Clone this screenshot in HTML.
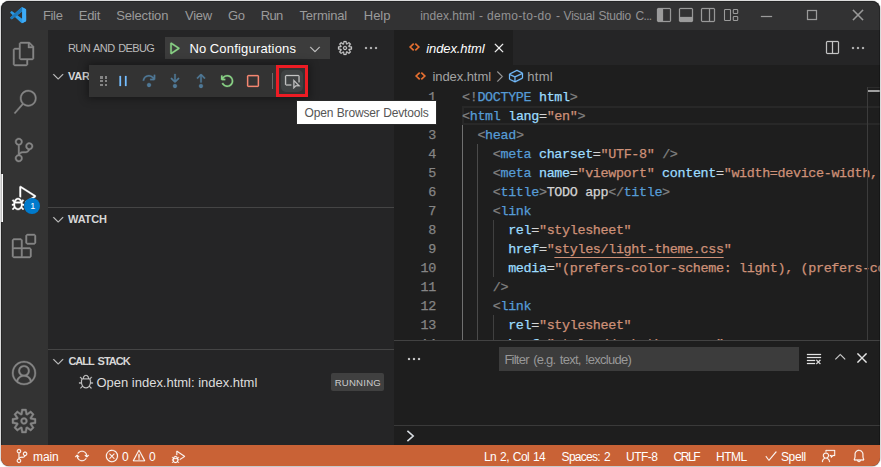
<!DOCTYPE html>
<html lang="en"><head><meta charset="utf-8"><title>index.html - demo-to-do - Visual Studio Code</title>
<style>
html,body{margin:0;padding:0;}
body{width:881px;height:467px;background:#ffffff;position:relative;overflow:hidden;font-family:"Liberation Sans",sans-serif;}
#bg{position:absolute;left:0;top:0;width:881px;height:467px;background:#ffffff;border:1px solid #dcdcdc;border-bottom-color:#c6cacd;border-radius:9px;box-sizing:border-box;}
#edge{position:absolute;left:1px;top:1px;width:877px;height:443px;border-radius:8px 8px 0 0;border:1px solid rgba(0,0,0,.25);border-bottom:none;pointer-events:none;}
#win{position:absolute;left:1px;top:1px;width:879px;height:465px;border-radius:8px;overflow:hidden;background:#1e1e1e;}
#in{position:absolute;left:-1px;top:-1px;width:881px;height:467px;}
.r{position:absolute;box-sizing:content-box;}
.i{position:absolute;display:block;overflow:visible;}
.t{position:absolute;white-space:pre;line-height:20px;height:20px;}
.code{position:absolute;overflow:hidden;font-family:"Liberation Mono",monospace;font-size:13.4px;letter-spacing:-0.341px;-webkit-text-stroke:0.25px;}
.cl{position:absolute;left:68px;white-space:pre;line-height:19px;height:19px;}
.ln{position:absolute;left:0;width:42px;text-align:right;white-space:pre;line-height:19px;height:19px;color:#858585;}
</style></head>
<body><div id="bg"></div><div id="win"><div id="in">
<div class="r" style="left:1px;top:1px;width:879px;height:29px;background:#323233;"></div>
<div class="r" style="left:1px;top:30px;width:47px;height:415px;background:#333333;"></div>
<div class="r" style="left:48px;top:30px;width:346px;height:415px;background:#252526;"></div>
<div class="r" style="left:394px;top:30px;width:486px;height:35px;background:#252526;"></div>
<div class="r" style="left:394px;top:30px;width:119px;height:35px;background:#1e1e1e;"></div>
<div class="r" style="left:394px;top:65px;width:486px;height:380px;background:#1e1e1e;"></div>
<div class="r" style="left:1px;top:445px;width:879px;height:21px;background:#c96236;"></div>
<svg class="i" style="left:8.7px;top:5.9px" width="19.6" height="19.6" viewBox="0 0 16 16">
<clipPath id="lg"><path d="M10.88 13.92Q10.56 14.08 10.24 13.92Q10.08 13.87 9.92 13.76L4.8 9.07L2.56 10.77Q2.45 10.88 2.24 10.88Q2.03 10.88 1.87 10.72L1.17 10.08Q1.01 9.92 1.01 9.68Q1.01 9.44 1.17 9.28L3.09 7.52L1.17 5.71Q1.01 5.55 1.01 5.31Q1.01 5.07 1.17 4.91L1.87 4.27Q2.03 4.11 2.24 4.11Q2.45 4.11 2.56 4.21L4.8 5.92L10.03 1.17Q10.24 1.01 10.45 0.99Q10.67 0.96 10.88 1.07L13.55 2.4Q13.76 2.45 13.87 2.67Q13.97 2.88 13.97 3.09V8H10.77V4.53L6.88 7.52L10.77 10.45V8H14.03V11.89Q14.03 12.11 13.89 12.32Q13.76 12.53 13.55 12.64Z"/></clipPath>
<path d="M10.88 13.92Q10.56 14.08 10.24 13.92Q10.08 13.87 9.92 13.76L4.8 9.07L2.56 10.77Q2.45 10.88 2.24 10.88Q2.03 10.88 1.87 10.72L1.17 10.08Q1.01 9.92 1.01 9.68Q1.01 9.44 1.17 9.28L3.09 7.52L1.17 5.71Q1.01 5.55 1.01 5.31Q1.01 5.07 1.17 4.91L1.87 4.27Q2.03 4.11 2.24 4.11Q2.45 4.11 2.56 4.21L4.8 5.92L10.03 1.17Q10.24 1.01 10.45 0.99Q10.67 0.96 10.88 1.07L13.55 2.4Q13.76 2.45 13.87 2.67Q13.97 2.88 13.97 3.09V8H10.77V4.53L6.88 7.52L10.77 10.45V8H14.03V11.89Q14.03 12.11 13.89 12.32Q13.76 12.53 13.55 12.64Z" fill="#2b9ae6"/>
<path clip-path="url(#lg)" d="M10.03 1.1 L10.9 0.9 L10.9 4.45 L2.56 10.8 L2.2 11 L1 10.1 L1 9.3 Z" fill="#1c78bb"/>
<path d="M10.77 1 L13.6 2.4 Q13.97 2.6 13.97 3.09 V11.89 Q14 12.4 13.55 12.64 L10.77 14 Z" fill="#3dabf7"/>
</svg>
<span class="t" style="left:43.00px;top:5.50px;font-size:13px;color:#9b9b9b;letter-spacing:-0.362px;">File</span>
<span class="t" style="left:78.75px;top:5.50px;font-size:13px;color:#9b9b9b;letter-spacing:-0.288px;">Edit</span>
<span class="t" style="left:116.25px;top:5.50px;font-size:13px;color:#9b9b9b;letter-spacing:-0.164px;">Selection</span>
<span class="t" style="left:185.00px;top:5.50px;font-size:13px;color:#9b9b9b;letter-spacing:-0.236px;">View</span>
<span class="t" style="left:228.10px;top:5.50px;font-size:13px;color:#9b9b9b;letter-spacing:-0.521px;">Go</span>
<span class="t" style="left:260.75px;top:5.50px;font-size:13px;color:#9b9b9b;letter-spacing:-0.699px;">Run</span>
<span class="t" style="left:299.50px;top:5.50px;font-size:13px;color:#9b9b9b;letter-spacing:-0.203px;">Terminal</span>
<span class="t" style="left:363.75px;top:5.50px;font-size:13px;color:#9b9b9b;letter-spacing:0.003px;">Help</span>
<span class="t" style="left:420.20px;top:6.34px;font-size:12px;color:#939393;letter-spacing:0.001px;">index.html</span>
<span class="t" style="left:479.00px;top:6.34px;font-size:12px;color:#939393;letter-spacing:0.104px;">-</span>
<span class="t" style="left:486.90px;top:6.34px;font-size:12px;color:#939393;letter-spacing:0.333px;">demo-to-do</span>
<span class="t" style="left:556.10px;top:6.34px;font-size:12px;color:#939393;letter-spacing:0.104px;">-</span>
<span class="t" style="left:563.60px;top:6.34px;font-size:12px;color:#939393;letter-spacing:-0.228px;">Visual</span>
<span class="t" style="left:598.40px;top:6.34px;font-size:12px;color:#939393;letter-spacing:-0.238px;">Studio</span>
<span class="t" style="left:635.50px;top:6.34px;font-size:12px;color:#939393;letter-spacing:-0.667px;">C...</span>
<svg class="i" style="left:656.00px;top:7.00px;" width="16" height="16" viewBox="0 0 16 16" fill="#9b9b9b" stroke="#9b9b9b" stroke-width="0.25"><path d="M2.03 1.01 1.01 1.97V13.97L2.03 14.99H14.03L14.99 13.97V1.97L14.03 1.01ZM14.03 13.97H6.99V1.97H14.03Z"/></svg>
<svg class="i" style="left:678.00px;top:7.00px;" width="16" height="16" viewBox="0 0 16 16" fill="#9b9b9b" stroke="#9b9b9b" stroke-width="0.25"><path d="M2.03 1.01 1.01 1.97V13.97L2.03 14.99H14.03L14.99 13.97V1.97L14.03 1.01ZM2.03 9.97V1.97H14.03V9.97Z"/></svg>
<svg class="i" style="left:700.00px;top:7.00px;" width="16" height="16" viewBox="0 0 16 16" fill="#9b9b9b" stroke="#9b9b9b" stroke-width="0.25"><path d="M2.03 1.01 1.01 2.03V14.03L2.03 14.99H14.03L14.99 14.03V2.03L14.03 1.01ZM2.03 14.03V2.03H9.01V14.03ZM10.03 14.03V2.03H14.03V14.03Z"/></svg>
<svg class="i" style="left:722.5px;top:7px" width="16" height="16" viewBox="0 0 16 16" fill="none" stroke="#9b9b9b" stroke-width="1.1"><rect x="1.5" y="2.5" width="6" height="11" rx="0.8"/><rect x="10.3" y="2.5" width="4.4" height="4" rx="0.8"/><rect x="10.3" y="9.5" width="4.4" height="4" rx="0.8"/></svg>
<svg class="i" style="left:757.70px;top:7.50px;" width="16" height="16" viewBox="0 0 16 16" fill="#9b9b9b" stroke="#9b9b9b" stroke-width="0.25"><path d="M14.03 8V9.01H2.99V8Z"/></svg>
<svg class="i" style="left:804.00px;top:7.00px;" width="16" height="16" viewBox="0 0 16 16" fill="#9b9b9b" stroke="#9b9b9b" stroke-width="0.25"><path d="M2.99 2.99V13.01H13.01V2.99ZM12 12H4V4H12Z"/></svg>
<svg class="i" style="left:850.00px;top:7.00px;" width="16" height="16" viewBox="0 0 16 16" fill="#9b9b9b" stroke="#9b9b9b" stroke-width="0.25"><path d="M7.09 8 2.56 12.53 3.47 13.44 8 8.91 12.53 13.44 13.44 12.53 8.91 8 13.44 3.47 12.53 2.56 8 7.09 3.47 2.56 2.56 3.47Z"/></svg>
<svg class="i" style="left:12.00px;top:42.00px;" width="24" height="24" viewBox="0 0 16 16" fill="#858585" stroke="#858585" stroke-width="0.25"><path d="M11.68 0H5.65L4.69 1.01V4H1.65L0.69 5.01V15.04L1.65 16H9.71L10.67 15.04V12H13.81L14.67 11.04V2.99ZM11.68 1.39 13.28 2.99H11.68ZM9.65 14.99H1.65V5.01H4.69V11.04L5.65 12H9.65ZM13.65 10.99H5.65V1.01H10.67V4H13.65Z"/></svg>
<svg class="i" style="left:12.50px;top:90.00px;" width="24" height="24" viewBox="0 0 16 16" fill="#858585" stroke="#858585" stroke-width="0.25"><path d="M10.19 0Q8.53 0 7.17 0.88Q5.81 1.76 5.15 3.25Q4.48 4.75 4.72 6.35Q4.96 7.95 6.03 9.12L0.69 15.25L1.44 15.89L6.77 9.81Q8.21 10.93 10 10.99Q11.79 11.04 13.28 10.03Q14.77 9.01 15.36 7.31Q15.95 5.6 15.41 3.87Q14.88 2.13 13.41 1.07Q11.95 0 10.19 0ZM10.19 9.97Q8.96 9.97 7.92 9.39Q6.88 8.8 6.27 7.76Q5.65 6.72 5.65 5.49Q5.65 4.27 6.27 3.23Q6.88 2.19 7.92 1.6Q8.96 1.01 10.19 1.01Q11.41 1.01 12.43 1.6Q13.44 2.19 14.05 3.23Q14.67 4.27 14.67 5.49Q14.67 6.72 14.05 7.76Q13.44 8.8 12.43 9.41Q11.41 10.03 10.19 10.03Z"/></svg>
<svg class="i" style="left:12.00px;top:138.00px;" width="24" height="24" viewBox="0 0 16 16" fill="#858585" stroke="#858585" stroke-width="0.25"><path d="M14.03 5.49Q14.03 4.8 13.65 4.19Q13.28 3.57 12.64 3.25Q12 2.93 11.31 2.99Q10.61 3.04 10.03 3.47Q9.44 3.89 9.2 4.56Q8.96 5.23 9.07 5.92Q9.17 6.61 9.65 7.12Q10.13 7.63 10.83 7.84Q10.56 8.37 10.08 8.67Q9.6 8.96 9.01 8.96H7.04Q5.87 8.96 5.01 9.76V4.91Q5.97 4.75 6.53 3.97Q7.09 3.2 7.01 2.24Q6.93 1.28 6.21 0.64Q5.49 0 4.53 0Q3.57 0 2.85 0.64Q2.13 1.28 2.05 2.24Q1.97 3.2 2.53 3.97Q3.09 4.75 4.05 4.91V10.99Q3.09 11.2 2.51 11.95Q1.92 12.69 2 13.65Q2.08 14.61 2.75 15.28Q3.41 15.95 4.37 16Q5.33 16.05 6.08 15.47Q6.83 14.88 6.99 13.92Q7.15 12.96 6.67 12.16Q6.19 11.36 5.23 11.09Q5.49 10.56 5.97 10.27Q6.45 9.97 7.04 9.97H9.01Q9.97 9.97 10.75 9.41Q11.52 8.85 11.84 7.95Q12.75 7.84 13.39 7.12Q14.03 6.4 14.03 5.49ZM3.04 2.51Q3.04 1.87 3.47 1.44Q3.89 1.01 4.53 1.01Q5.17 1.01 5.6 1.44Q6.03 1.87 6.03 2.48Q6.03 3.09 5.6 3.55Q5.17 4 4.53 4Q3.89 4 3.47 3.55Q3.04 3.09 3.04 2.51ZM6.03 13.44Q6.03 14.08 5.6 14.51Q5.17 14.93 4.53 14.93Q3.89 14.93 3.47 14.51Q3.04 14.08 3.04 13.47Q3.04 12.85 3.47 12.4Q3.89 11.95 4.53 11.95Q5.17 11.95 5.6 12.4Q6.03 12.85 6.03 13.44ZM11.52 6.99Q10.88 6.99 10.45 6.53Q10.03 6.08 10.03 5.47Q10.03 4.85 10.45 4.43Q10.88 4 11.49 4Q12.11 4 12.56 4.43Q13.01 4.85 13.01 5.47Q13.01 6.08 12.56 6.53Q12.11 6.99 11.52 6.99Z"/></svg>
<div class="r" style="left:1px;top:174px;width:1.6px;height:48px;background:#ffffff;"></div>
<svg class="i" style="left:12.20px;top:186.00px;" width="24" height="24" viewBox="0 0 16 16" fill="#ffffff" stroke="#ffffff" stroke-width="0.25"><path d="M7.31 9.01 6.4 9.87Q6.19 9.07 5.52 8.53Q4.85 8 4 8Q3.15 8 2.48 8.53Q1.81 9.07 1.6 9.87L0.69 9.01L0 9.71L1.17 10.83L1.01 10.99V12H0V13.01H1.01V13.07Q1.07 13.55 1.28 14.03L0 15.31L0.69 16L1.81 14.88Q2.19 15.41 2.77 15.71Q3.36 16 4 16Q4.64 16 5.23 15.71Q5.81 15.41 6.19 14.88L7.31 16L8 15.31L6.72 13.97Q6.93 13.55 6.99 13.01V12.96H8V12H6.99V10.99L6.88 10.83L8 9.71ZM4 9.01Q4.64 9.01 5.07 9.44Q5.49 9.87 5.49 10.51H2.51Q2.51 9.87 2.93 9.44Q3.36 9.01 4 9.01ZM6.03 13.01Q5.92 13.81 5.36 14.37Q4.8 14.93 4 14.99Q3.2 14.93 2.64 14.37Q2.08 13.81 2.03 13.01V11.52H6.03ZM15.84 6.4V7.25L9.01 11.57V10.4L14.67 6.83L6.03 1.33V7.63Q5.55 7.31 5.01 7.15V0.43L5.76 0Z"/></svg>
<div class="r" style="left:24px;top:198px;width:16px;height:16px;border-radius:8px;background:#007acc"></div>
<span class="t" style="left:30.20px;top:196.08px;font-size:9px;color:#ffffff;letter-spacing:-1.405px;">1</span>
<svg class="i" style="left:12.20px;top:234.00px;" width="24" height="24" viewBox="0 0 16 16" fill="#858585" stroke="#858585" stroke-width="0.25"><path d="M9.01 1.01 10.03 0H14.99L16 1.01V5.97L14.99 6.99H10.03L9.01 5.97ZM10.03 1.01V5.97H14.99V1.01ZM0 9.97V4L1.01 2.99H6.03L6.99 4V9.01H12L13.01 9.97V14.99L12 16H1.01L0 14.99ZM6.03 9.01V4H1.01V9.01ZM6.03 9.97H1.01V14.99H6.03ZM6.99 14.99H12V9.97H6.99Z"/></svg>
<svg class="i" style="left:12.20px;top:361.00px;" width="24" height="24" viewBox="0 0 16 16" fill="#858585" stroke="#858585" stroke-width="0.25"><path d="M16 8Q16 5.81 14.93 3.97Q13.87 2.13 12.03 1.07Q10.19 0 8 0Q5.81 0 3.97 1.07Q2.13 2.13 1.07 3.97Q0 5.81 0 8Q0 9.76 0.75 11.36Q1.49 12.96 2.83 14.08L3.52 14.61Q5.55 16 8 16Q10.45 16 12.48 14.61L13.23 14.08Q14.51 12.96 15.25 11.36Q16 9.76 16 8ZM8 14.99Q5.81 14.99 4 13.71L4.05 13.33Q4.21 12.8 4.48 12.35Q4.75 11.89 5.12 11.52Q5.49 11.15 5.92 10.88Q6.35 10.61 6.91 10.48Q7.47 10.35 8 10.35Q8.8 10.35 9.57 10.64Q10.35 10.93 10.91 11.49Q11.47 12.05 11.79 12.8Q11.95 13.23 12.05 13.71Q10.24 14.99 8 14.99ZM5.55 7.57Q5.33 7.09 5.33 6.56Q5.33 6.03 5.55 5.55Q5.76 5.07 6.11 4.72Q6.45 4.37 6.93 4.13Q7.41 3.89 8 3.89Q8.59 3.89 9.04 4.11Q9.49 4.32 9.87 4.69Q10.24 5.07 10.45 5.55Q10.67 6.03 10.67 6.59Q10.67 7.15 10.45 7.6Q10.24 8.05 9.87 8.43Q9.49 8.8 9.01 9.01Q8 9.44 6.93 9.01Q6.51 8.8 6.13 8.43Q5.76 8.05 5.55 7.57ZM12.96 12.91Q12.96 12.91 12.96 12.85V12.8Q12.75 12.05 12.29 11.41Q11.84 10.77 11.2 10.29Q10.72 9.92 10.13 9.65Q10.4 9.49 10.61 9.28Q10.99 8.91 11.25 8.48Q11.79 7.63 11.73 6.56Q11.79 5.81 11.49 5.12Q11.2 4.43 10.67 3.89Q10.13 3.36 9.44 3.09Q8.75 2.83 7.97 2.83Q7.2 2.83 6.51 3.09Q5.81 3.36 5.31 3.89Q4.8 4.43 4.51 5.12Q4.21 5.81 4.21 6.56Q4.21 7.09 4.37 7.6Q4.53 8.11 4.75 8.48Q4.96 8.85 5.39 9.28Q5.6 9.49 5.87 9.71Q5.33 9.92 4.85 10.29Q4.21 10.77 3.76 11.41Q3.31 12.05 3.04 12.85V12.91Q2.08 11.95 1.55 10.67Q1.01 9.39 1.01 8Q1.01 6.08 1.95 4.48Q2.88 2.88 4.48 1.95Q6.08 1.01 8 1.01Q9.92 1.01 11.52 1.95Q13.12 2.88 14.05 4.48Q14.99 6.08 14.99 8Q14.99 9.39 14.48 10.67Q13.97 11.95 12.96 12.91Z"/></svg>
<svg class="i" style="left:12.20px;top:409.00px;" width="24" height="24" viewBox="0 0 16 16" fill="#858585" stroke="#858585" stroke-width="0.25"><path d="M13.23 5.81 16 6.4V9.6L13.23 10.19L14.83 12.53L12.53 14.77L10.19 13.23L9.6 16H6.4L5.81 13.23L3.47 14.83L1.23 12.53L2.77 10.19L0 9.6V6.4L2.77 5.81L1.23 3.47L3.47 1.17L5.81 2.77L6.4 0H9.6L10.19 2.77L12.53 1.17L14.83 3.47ZM12.21 9.23 14.88 8.69V7.36L12.21 6.77L11.84 5.92L13.33 3.63L12.43 2.67L10.13 4.21L9.23 3.84L8.69 1.17H7.36L6.83 3.84L5.97 4.21L3.68 2.67L2.72 3.63L4.27 5.92L3.89 6.77L1.23 7.36V8.69L3.89 9.23L4.27 10.08L2.72 12.37L3.68 13.33L5.97 11.79L6.83 12.16L7.36 14.83H8.69L9.23 12.16L10.13 11.79L12.43 13.33L13.33 12.37L11.84 10.08ZM6.72 6.08Q7.31 5.71 8 5.71Q8.96 5.71 9.63 6.37Q10.29 7.04 10.29 8Q10.29 8.8 9.76 9.44Q9.23 10.08 8.43 10.24Q7.63 10.4 6.91 10.03Q6.19 9.65 5.89 8.88Q5.6 8.11 5.81 7.33Q6.03 6.56 6.72 6.08ZM7.36 8.96Q7.68 9.12 8 9.12Q8.48 9.12 8.8 8.8Q9.12 8.48 9.12 8.03Q9.12 7.57 8.88 7.28Q8.64 6.99 8.24 6.91Q7.84 6.83 7.47 7.01Q7.09 7.2 6.93 7.57Q6.77 7.95 6.91 8.35Q7.04 8.75 7.36 8.96Z"/></svg>
<span class="t" style="left:68.00px;top:38.19px;font-size:11px;color:#bbbbbb;letter-spacing:-0.598px;word-spacing:1.195px;">RUN AND DEBUG</span>
<div class="r" style="left:165px;top:37px;width:165px;height:22px;background:#3c3c3c;"></div>
<svg class="i" style="left:166.40px;top:40.00px;" width="16" height="16" viewBox="0 0 16 16" fill="#89d185" stroke="#89d185" stroke-width="0.25"><path d="M4.27 2.99 5.44 2.4 13.44 7.73V8.96L5.44 14.29L4.27 13.65ZM5.76 4.43V12.27L11.63 8.32Z"/></svg>
<span class="t" style="left:189.40px;top:39.10px;font-size:13px;color:#ffffff;letter-spacing:0.183px;word-spacing:-0.366px;">No Configurations</span>
<svg class="i" style="left:307.30px;top:40.50px;" width="16" height="16" viewBox="0 0 16 16" fill="#cccccc" stroke="#cccccc" stroke-width="0.25"><path d="M8 10.08 12.32 5.71 12.96 6.35 8.27 10.99H7.68L2.99 6.35L3.63 5.71Z"/></svg>
<svg class="i" style="left:337.20px;top:40.00px;" width="16" height="16" viewBox="0 0 16 16" fill="#c5c5c5" stroke="#c5c5c5" stroke-width="0.25"><path d="M9.12 4.37 8.59 1.97H7.41L6.88 4.37L6.19 4.69L4.21 3.41L3.31 4.21L4.59 6.19L4.43 6.88L2.03 7.41V8.59L4.43 9.12L4.69 9.92L3.41 11.89L4.21 12.69L6.19 11.41L6.99 11.68L7.41 13.97H8.59L9.12 11.57L9.92 11.31L11.89 12.59L12.69 11.79L11.41 9.81L11.68 9.01L14.03 8.59V7.41L11.63 6.88L11.31 6.08L12.59 4.11L11.79 3.31L9.81 4.59ZM9.39 1.01 9.92 3.41 12 2.08 14.03 4.11 12.59 6.19 14.99 6.61V9.39L12.59 9.92L14.03 12L12 13.97L9.92 12.59L9.39 14.99H6.61L6.08 12.59L4 13.92L2.03 11.89L3.41 9.81L1.01 9.39V6.61L3.41 6.08L2.08 4L4.11 1.97L6.19 3.41L6.61 1.01ZM10.03 8Q10.03 8.8 9.41 9.39Q8.8 9.97 8 9.97Q7.2 9.97 6.61 9.39Q6.03 8.8 6.03 8Q6.03 7.2 6.61 6.59Q7.2 5.97 8 5.97Q8.8 5.97 9.41 6.59Q10.03 7.2 10.03 8ZM8 9.01Q8.43 9.01 8.72 8.72Q9.01 8.43 9.01 8Q9.01 7.57 8.72 7.28Q8.43 6.99 8 6.99Q7.57 6.99 7.28 7.28Q6.99 7.57 6.99 8Q6.99 8.43 7.28 8.72Q7.57 9.01 8 9.01Z"/></svg>
<svg class="i" style="left:363.00px;top:40.00px;" width="16" height="16" viewBox="0 0 16 16" fill="#c5c5c5" stroke="#c5c5c5" stroke-width="0.25"><path d="M4 8Q4 8.43 3.71 8.72Q3.41 9.01 2.99 9.01Q2.56 9.01 2.29 8.72Q2.03 8.43 2.03 8Q2.03 7.57 2.29 7.28Q2.56 6.99 2.99 6.99Q3.41 6.99 3.71 7.28Q4 7.57 4 8ZM9.01 8Q9.01 8.43 8.72 8.72Q8.43 9.01 8 9.01Q7.57 9.01 7.28 8.72Q6.99 8.43 6.99 8Q6.99 7.57 7.28 7.28Q7.57 6.99 8 6.99Q8.43 6.99 8.72 7.28Q9.01 7.57 9.01 8ZM14.03 8Q14.03 8.43 13.73 8.72Q13.44 9.01 13.01 9.01Q12.59 9.01 12.29 8.72Q12 8.43 12 8Q12 7.57 12.29 7.28Q12.59 6.99 13.01 6.99Q13.44 6.99 13.73 7.28Q14.03 7.57 14.03 8Z"/></svg>
<svg class="i" style="left:49.95px;top:68.15px;" width="16.5" height="16.5" viewBox="0 0 16 16" fill="#d4d4d4" stroke="#d4d4d4" stroke-width="0.25"><path d="M8 10.08 12.32 5.71 12.96 6.35 8.27 10.99H7.68L2.99 6.35L3.63 5.71Z"/></svg>
<span class="t" style="left:68.00px;top:66.19px;font-size:11px;color:#d7d7d7;letter-spacing:-0.194px;font-weight:bold;">VARIABLES</span>
<div class="r" style="left:48px;top:207px;width:346px;height:1px;background:#454545;"></div>
<svg class="i" style="left:49.95px;top:211.15px;" width="16.5" height="16.5" viewBox="0 0 16 16" fill="#d4d4d4" stroke="#d4d4d4" stroke-width="0.25"><path d="M8 10.08 12.32 5.71 12.96 6.35 8.27 10.99H7.68L2.99 6.35L3.63 5.71Z"/></svg>
<span class="t" style="left:68.00px;top:209.19px;font-size:11px;color:#d7d7d7;letter-spacing:-0.142px;font-weight:bold;">WATCH</span>
<div class="r" style="left:48px;top:349px;width:346px;height:1px;background:#454545;"></div>
<svg class="i" style="left:49.95px;top:353.15px;" width="16.5" height="16.5" viewBox="0 0 16 16" fill="#d4d4d4" stroke="#d4d4d4" stroke-width="0.25"><path d="M8 10.08 12.32 5.71 12.96 6.35 8.27 10.99H7.68L2.99 6.35L3.63 5.71Z"/></svg>
<span class="t" style="left:68.40px;top:351.19px;font-size:11px;color:#d7d7d7;letter-spacing:-0.994px;word-spacing:1.989px;font-weight:bold;">CALL STACK</span>
<svg class="i" style="left:78.00px;top:373.70px;" width="16" height="16" viewBox="0 0 16 16" fill="#d0d0d0" stroke="#d0d0d0" stroke-width="0.25"><path d="M10.88 4.48V3.89Q10.88 2.72 10.03 1.87Q9.17 1.01 7.97 1.01Q6.77 1.01 5.92 1.87Q5.07 2.72 5.07 3.89V4.48H4.21L2.56 2.83L1.97 3.41L3.57 5.01L3.52 5.07Q3.04 6.45 3.04 7.89V8.53H1.01V9.39H3.15H3.2Q3.41 10.83 4.11 11.95L4.16 12L2.19 13.97L2.77 14.56L4.64 12.69L4.75 12.75Q5.39 13.49 6.21 13.92Q7.04 14.35 7.95 14.35Q8.85 14.35 9.68 13.95Q10.51 13.55 11.15 12.8L11.2 12.75L13.12 14.67L13.71 14.08L11.73 12.05V12Q12.48 10.83 12.75 9.39H14.93V8.53H12.85V7.89Q12.91 6.45 12.37 5.07L12.32 5.01L13.92 3.41L13.33 2.83L11.68 4.48ZM5.87 4.48V3.89Q5.87 3.04 6.48 2.43Q7.09 1.81 7.95 1.81Q8.8 1.81 9.41 2.43Q10.03 3.04 10.03 3.89V4.48ZM11.57 5.33V5.39Q12.05 6.56 12.05 7.89Q12.05 9.12 11.71 10.16Q11.36 11.2 10.77 11.95Q10.19 12.69 9.47 13.09Q8.75 13.49 7.97 13.49Q7.2 13.49 6.45 13.09Q5.71 12.69 5.12 11.95Q4.53 11.2 4.21 10.16Q3.89 9.12 3.89 7.89Q3.89 6.56 4.32 5.39V5.33Z"/></svg>
<span class="t" style="left:96.50px;top:372.50px;font-size:13px;color:#dddddd;letter-spacing:-0.015px;word-spacing:0.029px;">Open index.html: index.html</span>
<div class="r" style="left:331px;top:373px;width:53px;height:18px;background:#404040;border-radius:2px;"></div>
<span class="t" style="left:334.70px;top:372.67px;font-size:9.6px;color:#cccccc;letter-spacing:0.214px;">RUNNING</span>
<div class="r" style="left:89px;top:65px;width:219px;height:32px;background:#333333;box-shadow:0 0 8px 2px rgba(0,0,0,.36)"></div>
<div class="r" style="left:100.3px;top:76.2px;width:2.4px;height:2.4px;background:#858585;"></div>
<div class="r" style="left:100.3px;top:80px;width:2.4px;height:2.4px;background:#858585;"></div>
<div class="r" style="left:100.3px;top:83.8px;width:2.4px;height:2.4px;background:#858585;"></div>
<div class="r" style="left:104.9px;top:76.2px;width:2.4px;height:2.4px;background:#858585;"></div>
<div class="r" style="left:104.9px;top:80px;width:2.4px;height:2.4px;background:#858585;"></div>
<div class="r" style="left:104.9px;top:83.8px;width:2.4px;height:2.4px;background:#858585;"></div>
<svg class="i" style="left:115.00px;top:73.00px;" width="16" height="16" viewBox="0 0 16 16" fill="#75beff" stroke="#75beff" stroke-width="0.25"><path d="M4.48 2.99H6.03V13.01H4.48ZM11.52 2.99V13.01H10.03V2.99Z"/></svg>
<svg class="i" style="left:141.00px;top:72.60px;" width="16" height="16" viewBox="0 0 16 16" fill="#4f7896" stroke="#4f7896" stroke-width="0.25"><path d="M14.24 5.76V1.76H12.75V4.27Q11.89 3.25 10.61 2.67Q9.33 2.08 7.89 2.08Q6.35 2.08 4.96 2.8Q3.57 3.52 2.72 4.75Q1.87 5.97 1.76 7.47L1.71 7.73H3.25V7.52Q3.36 6.45 4 5.55Q4.64 4.64 5.68 4.11Q6.72 3.57 7.95 3.57Q9.17 3.57 10.27 4.16Q11.36 4.75 11.95 5.76H9.12V7.25H13.28L14.24 6.29ZM8 13.97Q8.85 13.97 9.44 13.41Q10.03 12.85 10.03 12Q10.03 11.15 9.44 10.59Q8.85 10.03 8 10Q7.15 9.97 6.59 10.56Q6.03 11.15 6.03 12Q6.03 12.85 6.59 13.44Q7.15 14.03 8 14.03Z"/></svg>
<svg class="i" style="left:167.00px;top:72.60px;" width="16" height="16" viewBox="0 0 16 16" fill="#4f7896" stroke="#4f7896" stroke-width="0.25"><path d="M8 9.55H8.53L12.43 5.65L11.36 4.59L8.75 7.2V1.01H7.25V7.2L4.64 4.59L3.57 5.65L7.47 9.55ZM9.97 13.01Q9.97 13.87 9.39 14.43Q8.8 14.99 7.97 14.99Q7.15 14.99 6.56 14.43Q5.97 13.87 5.97 13.01Q5.97 12.16 6.56 11.57Q7.15 10.99 7.97 10.99Q8.8 10.99 9.39 11.57Q9.97 12.16 9.97 13.01Z"/></svg>
<svg class="i" style="left:192.80px;top:72.60px;" width="16" height="16" viewBox="0 0 16 16" fill="#4f7896" stroke="#4f7896" stroke-width="0.25"><path d="M8 1.01H7.47L3.57 4.91L4.64 5.97L7.25 3.36V9.55H8.75V3.36L11.36 5.97L12.43 4.91L8.53 1.01ZM9.97 13.01Q9.97 13.87 9.39 14.43Q8.8 14.99 7.97 14.99Q7.15 14.99 6.56 14.43Q5.97 13.87 5.97 13.01Q5.97 12.16 6.56 11.57Q7.15 10.99 7.97 10.99Q8.8 10.99 9.39 11.57Q9.97 12.16 9.97 13.01Z"/></svg>
<svg class="i" style="left:219.20px;top:73.00px;" width="16" height="16" viewBox="0 0 16 16" fill="#89d185" stroke="#89d185" stroke-width="0.25"><path d="M12.75 8Q12.75 9.6 11.73 10.83Q10.72 12.05 9.17 12.4Q7.63 12.75 6.21 12.03Q4.8 11.31 4.16 9.81L2.77 10.4Q3.31 11.68 4.37 12.56Q5.44 13.44 6.77 13.79Q8.11 14.13 9.47 13.87Q10.83 13.6 11.92 12.75Q13.01 11.89 13.63 10.64Q14.24 9.39 14.24 8Q14.24 6.08 13.12 4.51Q12 2.93 10.19 2.32Q8.37 1.71 6.53 2.27Q4.69 2.83 3.52 4.32V2.51H2.03V6.51L2.77 7.25H6.24V5.76H4.37Q5.12 4.43 6.53 3.84Q7.95 3.25 9.41 3.65Q10.88 4.05 11.81 5.25Q12.75 6.45 12.75 8Z"/></svg>
<svg class="i" style="left:245.00px;top:73.00px;" width="16" height="16" viewBox="0 0 16 16" fill="#f48771" stroke="#f48771" stroke-width="0.25"><path d="M13.01 1.97 14.03 2.99V13.01L13.01 13.97H2.99L2.03 13.01V2.99L2.99 1.97ZM12.75 3.25H3.25V12.75H12.75Z"/></svg>
<div class="r" style="left:272px;top:73px;width:1px;height:16px;background:#6a6a6a;"></div>
<div class="r" style="left:281px;top:70px;width:22px;height:22px;border-radius:5px;background:#3f4243"></div>
<svg class="i" style="left:283.50px;top:73.00px;" width="16.6" height="16.6" viewBox="0 0 16 16" fill="#c5c5c5" stroke="#c5c5c5" stroke-width="0.25"><path d="M1.01 2.99 2.03 1.97H14.03L14.99 2.99V9.01H14.03V2.99H2.03V10.99H6.99V12H2.03L1.01 10.99ZM15.73 12.69 9.01 5.97V15.41L11.73 12.69ZM10.03 13.01V8.43L13.28 11.73H11.31Z"/></svg>
<div class="r" style="left:276px;top:65px;width:26px;height:26px;border:3px solid #ed1c24;background:none"></div>
<svg class="i" style="left:409.00px;top:43.00px" width="11" height="8" viewBox="0 0 11 8" fill="none" stroke="#e56f30" stroke-width="1.7"><path d="M4.7 0.6 L1.2 4 L4.7 7.4 M6.3 0.6 L9.8 4 L6.3 7.4"/></svg>
<span class="t" style="left:426.30px;top:39.00px;font-size:13px;color:#ffffff;letter-spacing:-0.105px;font-style:italic;">index.html</span>
<svg class="i" style="left:491.20px;top:40.20px;" width="16" height="16" viewBox="0 0 16 16" fill="#ffffff" stroke="#ffffff" stroke-width="0.25"><path d="M8 8.69 11.63 12.37 12.37 11.63 8.69 8 12.37 4.37 11.63 3.63 8 7.31 4.37 3.63 3.63 4.37 7.31 8 3.63 11.63 4.37 12.37Z"/></svg>
<svg class="i" style="left:824.00px;top:40.00px;" width="16" height="16" viewBox="0 0 16 16" fill="#c5c5c5" stroke="#c5c5c5" stroke-width="0.25"><path d="M14.03 1.01H2.99L2.03 1.97V13.01L2.99 13.97H14.03L14.99 13.01V1.97ZM8 13.01H2.99V1.97H8ZM14.03 13.01H9.01V1.97H14.03Z"/></svg>
<svg class="i" style="left:850.00px;top:40.00px;" width="16" height="16" viewBox="0 0 16 16" fill="#c5c5c5" stroke="#c5c5c5" stroke-width="0.25"><path d="M4 8Q4 8.43 3.71 8.72Q3.41 9.01 2.99 9.01Q2.56 9.01 2.29 8.72Q2.03 8.43 2.03 8Q2.03 7.57 2.29 7.28Q2.56 6.99 2.99 6.99Q3.41 6.99 3.71 7.28Q4 7.57 4 8ZM9.01 8Q9.01 8.43 8.72 8.72Q8.43 9.01 8 9.01Q7.57 9.01 7.28 8.72Q6.99 8.43 6.99 8Q6.99 7.57 7.28 7.28Q7.57 6.99 8 6.99Q8.43 6.99 8.72 7.28Q9.01 7.57 9.01 8ZM14.03 8Q14.03 8.43 13.73 8.72Q13.44 9.01 13.01 9.01Q12.59 9.01 12.29 8.72Q12 8.43 12 8Q12 7.57 12.29 7.28Q12.59 6.99 13.01 6.99Q13.44 6.99 13.73 7.28Q14.03 7.57 14.03 8Z"/></svg>
<svg class="i" style="left:415.00px;top:72.00px" width="11" height="8" viewBox="0 0 11 8" fill="none" stroke="#e56f30" stroke-width="1.7"><path d="M4.7 0.6 L1.2 4 L4.7 7.4 M6.3 0.6 L9.8 4 L6.3 7.4"/></svg>
<span class="t" style="left:432.40px;top:66.80px;font-size:13px;color:#a3a3a3;letter-spacing:-0.065px;">index.html</span>
<svg class="i" style="left:490.80px;top:67.50px;" width="17" height="17" viewBox="0 0 16 16" fill="#a3a3a3" stroke="#a3a3a3" stroke-width="0.25"><path d="M10.08 8 5.71 3.68 6.35 3.04 10.99 7.73V8.32L6.35 13.01L5.71 12.37Z"/></svg>
<svg class="i" style="left:507.60px;top:68.00px;" width="16" height="16" viewBox="0 0 16 16" fill="#75beff" stroke="#75beff" stroke-width="0.25"><path d="M14.45 4.48 9.44 1.97H8.53L1.55 5.49L1.01 6.4V10.88L1.55 11.79L6.56 14.29H7.47L14.45 10.77L14.99 9.87V5.39ZM6.45 13.12 1.97 10.88V7.15L6.45 9.17ZM6.93 8.32 2.29 6.24 8.96 2.88 13.6 5.23ZM13.97 9.87 7.47 13.12V9.23L13.97 6.19Z"/></svg>
<span class="t" style="left:527.20px;top:66.80px;font-size:13px;color:#a3a3a3;letter-spacing:0.310px;">html</span>
<div class="r" style="left:462px;top:106px;width:420px;height:15px;border:2px solid #282828"></div>
<div class="r" style="left:462px;top:125px;width:1px;height:215px;background:#707070;"></div>
<div class="r" style="left:477px;top:144px;width:1px;height:196px;background:#4a4a4a;"></div>
<div class="r" style="left:493px;top:220px;width:1px;height:57px;background:#404040;"></div>
<div class="r" style="left:493px;top:315px;width:1px;height:25px;background:#404040;"></div>
<div class="code" style="left:394px;top:88px;width:486px;height:252px;">
<span class="ln" style="top:0px;">1</span>
<span class="cl" style="top:0px;"><span style="color:#808080">&lt;!</span><span style="color:#569cd6">DOCTYPE</span><span style="color:#d4d4d4"> </span><span style="color:#9cdcfe">html</span><span style="color:#808080">&gt;</span></span>
<span class="ln" style="top:19px;color:#c6c6c6;">2</span>
<span class="cl" style="top:19px;"><span style="color:#808080">&lt;</span><span style="color:#569cd6">html</span><span style="color:#d4d4d4"> </span><span style="color:#9cdcfe">lang</span><span style="color:#d4d4d4">=</span><span style="color:#ce9178">&quot;en&quot;</span><span style="color:#808080">&gt;</span></span>
<span class="ln" style="top:38px;">3</span>
<span class="cl" style="top:38px;"><span style="color:#d4d4d4">  </span><span style="color:#808080">&lt;</span><span style="color:#569cd6">head</span><span style="color:#808080">&gt;</span></span>
<span class="ln" style="top:57px;">4</span>
<span class="cl" style="top:57px;"><span style="color:#d4d4d4">    </span><span style="color:#808080">&lt;</span><span style="color:#569cd6">meta</span><span style="color:#d4d4d4"> </span><span style="color:#9cdcfe">charset</span><span style="color:#d4d4d4">=</span><span style="color:#ce9178">&quot;UTF-8&quot;</span><span style="color:#d4d4d4"> </span><span style="color:#808080">/&gt;</span></span>
<span class="ln" style="top:76px;">5</span>
<span class="cl" style="top:76px;"><span style="color:#d4d4d4">    </span><span style="color:#808080">&lt;</span><span style="color:#569cd6">meta</span><span style="color:#d4d4d4"> </span><span style="color:#9cdcfe">name</span><span style="color:#d4d4d4">=</span><span style="color:#ce9178">&quot;viewport&quot;</span><span style="color:#d4d4d4"> </span><span style="color:#9cdcfe">content</span><span style="color:#d4d4d4">=</span><span style="color:#ce9178">&quot;width=device-width, initial-scale=1.0&quot;</span><span style="color:#d4d4d4"> </span><span style="color:#808080">/&gt;</span></span>
<span class="ln" style="top:95px;">6</span>
<span class="cl" style="top:95px;"><span style="color:#d4d4d4">    </span><span style="color:#808080">&lt;</span><span style="color:#569cd6">title</span><span style="color:#808080">&gt;</span><span style="color:#d4d4d4">TODO app</span><span style="color:#808080">&lt;/</span><span style="color:#569cd6">title</span><span style="color:#808080">&gt;</span></span>
<span class="ln" style="top:114px;">7</span>
<span class="cl" style="top:114px;"><span style="color:#d4d4d4">    </span><span style="color:#808080">&lt;</span><span style="color:#569cd6">link</span></span>
<span class="ln" style="top:133px;">8</span>
<span class="cl" style="top:133px;"><span style="color:#d4d4d4">      </span><span style="color:#9cdcfe">rel</span><span style="color:#d4d4d4">=</span><span style="color:#ce9178">&quot;stylesheet&quot;</span></span>
<span class="ln" style="top:152px;">9</span>
<span class="cl" style="top:152px;"><span style="color:#d4d4d4">      </span><span style="color:#9cdcfe">href</span><span style="color:#d4d4d4">=</span><span style="color:#ce9178">&quot;</span><span style="color:#ce9178;text-decoration:underline;text-underline-offset:4px;text-decoration-thickness:1px">styles/light-theme.css</span><span style="color:#ce9178">&quot;</span></span>
<span class="ln" style="top:171px;">10</span>
<span class="cl" style="top:171px;"><span style="color:#d4d4d4">      </span><span style="color:#9cdcfe">media</span><span style="color:#d4d4d4">=</span><span style="color:#ce9178">&quot;(prefers-color-scheme: light), (prefers-color-scheme: no-preference)&quot;</span></span>
<span class="ln" style="top:190px;">11</span>
<span class="cl" style="top:190px;"><span style="color:#d4d4d4">    </span><span style="color:#808080">/&gt;</span></span>
<span class="ln" style="top:209px;">12</span>
<span class="cl" style="top:209px;"><span style="color:#d4d4d4">    </span><span style="color:#808080">&lt;</span><span style="color:#569cd6">link</span></span>
<span class="ln" style="top:228px;">13</span>
<span class="cl" style="top:228px;"><span style="color:#d4d4d4">      </span><span style="color:#9cdcfe">rel</span><span style="color:#d4d4d4">=</span><span style="color:#ce9178">&quot;stylesheet&quot;</span></span>
<span class="ln" style="top:247px;">14</span>
<span class="cl" style="top:247px;"><span style="color:#d4d4d4">      </span><span style="color:#9cdcfe">href</span><span style="color:#d4d4d4">=</span><span style="color:#ce9178">&quot;</span><span style="color:#ce9178;text-decoration:underline;text-underline-offset:4px;text-decoration-thickness:1px">styles/dark-theme.css</span><span style="color:#ce9178">&quot;</span></span>
</div>
<div class="r" style="left:867px;top:87px;width:1px;height:253px;background:#3c3c3c;"></div>
<div class="r" style="left:868px;top:87px;width:12px;height:1px;background:#2c2c2c;"></div>
<div class="r" style="left:868px;top:90px;width:12px;height:2px;background:#a0a0a0;"></div>
<div class="r" style="left:394px;top:340px;width:486px;height:1px;background:#424242;"></div>
<svg class="i" style="left:406.00px;top:351.00px;" width="16" height="16" viewBox="0 0 16 16" fill="#e0e0e0" stroke="#e0e0e0" stroke-width="0.25"><path d="M4 8Q4 8.43 3.71 8.72Q3.41 9.01 2.99 9.01Q2.56 9.01 2.29 8.72Q2.03 8.43 2.03 8Q2.03 7.57 2.29 7.28Q2.56 6.99 2.99 6.99Q3.41 6.99 3.71 7.28Q4 7.57 4 8ZM9.01 8Q9.01 8.43 8.72 8.72Q8.43 9.01 8 9.01Q7.57 9.01 7.28 8.72Q6.99 8.43 6.99 8Q6.99 7.57 7.28 7.28Q7.57 6.99 8 6.99Q8.43 6.99 8.72 7.28Q9.01 7.57 9.01 8ZM14.03 8Q14.03 8.43 13.73 8.72Q13.44 9.01 13.01 9.01Q12.59 9.01 12.29 8.72Q12 8.43 12 8Q12 7.57 12.29 7.28Q12.59 6.99 13.01 6.99Q13.44 6.99 13.73 7.28Q14.03 7.57 14.03 8Z"/></svg>
<div class="r" style="left:499px;top:347px;width:300px;height:24px;background:#3c3c3c;"></div>
<span class="t" style="left:504.40px;top:350.20px;font-size:13px;color:#989898;letter-spacing:-0.748px;word-spacing:1.496px;">Filter (e.g. text, !exclude)</span>
<svg class="i" style="left:806.00px;top:351.00px;" width="16" height="16" viewBox="0 0 16 16" fill="#e4e4e4" stroke="#e4e4e4" stroke-width="0.25"><path d="M10.03 12.59 10.72 13.28 12.32 11.68 13.92 13.28 14.72 12.59 13.01 10.99 14.72 9.39 13.92 8.59 12.32 10.29 10.72 8.59 10.03 9.39 11.63 10.99ZM1.01 4H14.99V2.99H1.01ZM1.01 6.99H14.99V5.97H1.01ZM9.01 9.49V9.01H1.01V9.97H9.01ZM9.01 13.01V12H1.01V13.01Z"/></svg>
<svg class="i" style="left:831.75px;top:349.35px;" width="16.5" height="16.5" viewBox="0 0 16 16" fill="#e4e4e4" stroke="#e4e4e4" stroke-width="0.25"><path d="M8 5.92 3.68 10.29 3.04 9.65 7.73 5.01H8.32L13.01 9.65L12.37 10.29Z"/></svg>
<svg class="i" style="left:853.30px;top:349.00px;" width="18" height="18" viewBox="0 0 16 16" fill="#e8e8e8" stroke="#e8e8e8" stroke-width="0.25"><path d="M8 8.69 11.63 12.37 12.37 11.63 8.69 8 12.37 4.37 11.63 3.63 8 7.31 4.37 3.63 3.63 4.37 7.31 8 3.63 11.63 4.37 12.37Z"/></svg>
<div class="r" style="left:394px;top:425px;width:486px;height:1px;background:#3a3a3a;"></div>
<svg class="i" style="left:404px;top:428px" width="14" height="16" viewBox="0 0 14 16" fill="none" stroke="#d8dde2" stroke-width="1.6"><path d="M3.4 2.8 L9.2 8 L3.4 13.2"/></svg>
<div class="r" style="left:296px;top:100px;width:139px;height:23px;background:#ffffff;border:1px solid #2a2a2a"></div>
<span class="t" style="left:304.50px;top:102.84px;font-size:12px;color:#555555;letter-spacing:-0.154px;word-spacing:0.308px;">Open Browser Devtools</span>
<svg class="i" style="left:14.50px;top:448.50px;" width="14" height="14" viewBox="0 0 16 16" fill="#ffffff" stroke="#ffffff" stroke-width="0.25"><path d="M14.03 5.49Q14.03 4.8 13.65 4.19Q13.28 3.57 12.64 3.25Q12 2.93 11.31 2.99Q10.61 3.04 10.03 3.47Q9.44 3.89 9.2 4.56Q8.96 5.23 9.07 5.92Q9.17 6.61 9.65 7.12Q10.13 7.63 10.83 7.84Q10.56 8.37 10.08 8.67Q9.6 8.96 9.01 8.96H7.04Q5.87 8.96 5.01 9.76V4.91Q5.97 4.75 6.53 3.97Q7.09 3.2 7.01 2.24Q6.93 1.28 6.21 0.64Q5.49 0 4.53 0Q3.57 0 2.85 0.64Q2.13 1.28 2.05 2.24Q1.97 3.2 2.53 3.97Q3.09 4.75 4.05 4.91V10.99Q3.09 11.2 2.51 11.95Q1.92 12.69 2 13.65Q2.08 14.61 2.75 15.28Q3.41 15.95 4.37 16Q5.33 16.05 6.08 15.47Q6.83 14.88 6.99 13.92Q7.15 12.96 6.67 12.16Q6.19 11.36 5.23 11.09Q5.49 10.56 5.97 10.27Q6.45 9.97 7.04 9.97H9.01Q9.97 9.97 10.75 9.41Q11.52 8.85 11.84 7.95Q12.75 7.84 13.39 7.12Q14.03 6.4 14.03 5.49ZM3.04 2.51Q3.04 1.87 3.47 1.44Q3.89 1.01 4.53 1.01Q5.17 1.01 5.6 1.44Q6.03 1.87 6.03 2.48Q6.03 3.09 5.6 3.55Q5.17 4 4.53 4Q3.89 4 3.47 3.55Q3.04 3.09 3.04 2.51ZM6.03 13.44Q6.03 14.08 5.6 14.51Q5.17 14.93 4.53 14.93Q3.89 14.93 3.47 14.51Q3.04 14.08 3.04 13.47Q3.04 12.85 3.47 12.4Q3.89 11.95 4.53 11.95Q5.17 11.95 5.6 12.4Q6.03 12.85 6.03 13.44ZM11.52 6.99Q10.88 6.99 10.45 6.53Q10.03 6.08 10.03 5.47Q10.03 4.85 10.45 4.43Q10.88 4 11.49 4Q12.11 4 12.56 4.43Q13.01 4.85 13.01 5.47Q13.01 6.08 12.56 6.53Q12.11 6.99 11.52 6.99Z"/></svg>
<span class="t" style="left:33.00px;top:447.24px;font-size:12px;color:#ffffff;letter-spacing:-0.103px;">main</span>
<svg class="i" style="left:75.00px;top:448.50px;" width="14" height="14" viewBox="0 0 16 16" fill="#ffffff" stroke="#ffffff" stroke-width="0.25"><path d="M2.03 8.27 0.8 9.49 0 8.75 2.08 6.67H2.83L4.96 8.8L4.16 9.55L2.99 8.37Q3.15 10.03 4.24 11.28Q5.33 12.53 6.96 12.88Q8.59 13.23 10.11 12.53Q11.63 11.84 12.43 10.35L13.23 10.93Q12.21 12.69 10.37 13.49Q8.53 14.29 6.59 13.84Q4.64 13.39 3.36 11.84Q2.08 10.29 2.03 8.27ZM13.01 7.79 11.79 6.56 10.99 7.31 13.07 9.44H13.87L15.95 7.36L15.2 6.61L13.97 7.79Q13.92 5.81 12.69 4.27Q11.47 2.72 9.55 2.21Q7.63 1.71 5.79 2.43Q3.95 3.15 2.88 4.85L3.68 5.44Q4.53 4 6.08 3.36Q7.63 2.72 9.23 3.15Q10.83 3.57 11.87 4.85Q12.91 6.13 13.01 7.79Z"/></svg>
<svg class="i" style="left:104.60px;top:448.50px;" width="14" height="14" viewBox="0 0 16 16" fill="#ffffff" stroke="#ffffff" stroke-width="0.25"><path d="M8.59 1.01Q9.76 1.07 10.85 1.6Q11.95 2.13 12.8 2.99Q14.83 5.17 14.83 8.11Q14.83 10.4 13.23 12.48Q12.43 13.44 11.41 14.05Q10.4 14.67 9.23 14.88Q6.67 15.36 4.59 14.19Q3.52 13.6 2.72 12.69Q1.92 11.79 1.49 10.67Q1.07 9.55 0.99 8.32Q0.91 7.09 1.28 5.97Q2.08 3.52 4.11 2.19Q5.07 1.55 6.21 1.23Q7.36 0.91 8.59 1.01ZM9.12 13.92Q11.15 13.44 12.48 11.79Q13.81 9.97 13.71 8Q13.71 6.77 13.25 5.65Q12.8 4.53 12 3.68Q10.45 2.13 8.43 1.97Q7.41 1.92 6.4 2.16Q5.39 2.4 4.59 2.99Q2.88 4.27 2.27 6.35Q1.65 8.43 2.53 10.35Q3.41 12.27 5.23 13.28Q6.08 13.81 7.09 13.97Q8.11 14.13 9.12 13.92ZM7.89 7.52 10.29 5.01 10.99 5.71 8.59 8.21 10.99 10.72 10.29 11.41 7.89 8.91 5.49 11.41 4.8 10.72 7.2 8.21 4.8 5.71 5.49 5.01Z"/></svg>
<span class="t" style="left:122.00px;top:447.24px;font-size:12px;color:#ffffff;letter-spacing:-0.374px;">0</span>
<svg class="i" style="left:131.60px;top:448.50px;" width="14" height="14" viewBox="0 0 16 16" fill="#ffffff" stroke="#ffffff" stroke-width="0.25"><path d="M7.57 1.01H8.43L14.99 13.28L14.56 13.97H1.44L1.01 13.28ZM8 2.29 2.29 13.01H13.71ZM8.64 12V10.99H7.36V12ZM7.36 9.97V5.97H8.64V9.97Z"/></svg>
<span class="t" style="left:149.10px;top:447.24px;font-size:12px;color:#ffffff;letter-spacing:-0.274px;">0</span>
<svg class="i" style="left:171.50px;top:448.50px;" width="14" height="14" viewBox="0 0 16 16" fill="#ffffff" stroke="#ffffff" stroke-width="0.25"><path d="M7.31 9.01 6.4 9.87Q6.19 9.07 5.52 8.53Q4.85 8 4 8Q3.15 8 2.48 8.53Q1.81 9.07 1.6 9.87L0.69 9.01L0 9.71L1.17 10.88L1.01 10.99V12H0V13.01H1.01V13.07Q1.07 13.55 1.28 14.03L0 15.31L0.69 16L1.81 14.88Q2.19 15.41 2.77 15.71Q3.36 16 4 16Q4.64 16 5.23 15.71Q5.81 15.41 6.19 14.88L7.31 16L8 15.31L6.72 14.03Q6.93 13.55 6.99 13.01V12.96H8V12H6.99V10.99L6.83 10.88L8 9.71ZM4 9.01Q4.64 9.01 5.07 9.44Q5.49 9.87 5.49 10.51H2.51Q2.51 9.87 2.93 9.44Q3.36 9.01 4 9.01ZM6.03 13.01Q5.92 13.81 5.36 14.37Q4.8 14.93 4 14.99Q3.2 14.93 2.64 14.37Q2.08 13.81 2.03 13.01V11.52H6.03ZM5.01 2.4 5.76 1.97 14.77 8V8.85L9.01 12.69V11.47L13.6 8.43L6.03 3.36V6.99H5.01Z"/></svg>
<span class="t" style="left:484.00px;top:447.34px;font-size:12px;color:#ffffff;letter-spacing:-0.585px;word-spacing:1.170px;">Ln 2, Col 14</span>
<span class="t" style="left:561.60px;top:447.34px;font-size:12px;color:#ffffff;letter-spacing:-0.710px;word-spacing:1.419px;">Spaces: 2</span>
<span class="t" style="left:626.00px;top:447.34px;font-size:12px;color:#ffffff;letter-spacing:-0.499px;">UTF-8</span>
<span class="t" style="left:673.50px;top:447.34px;font-size:12px;color:#ffffff;letter-spacing:-1.459px;">CRLF</span>
<span class="t" style="left:716.00px;top:447.34px;font-size:12px;color:#ffffff;letter-spacing:-0.517px;">HTML</span>
<span class="t" style="left:780.90px;top:447.34px;font-size:12px;color:#ffffff;letter-spacing:-0.337px;">Spell</span>
<svg class="i" style="left:763.50px;top:448.50px;" width="14" height="14" viewBox="0 0 16 16" fill="#ffffff" stroke="#ffffff" stroke-width="0.25"><path d="M14.45 3.31 5.97 13.33 5.17 13.28 1.81 8.53 2.61 7.95 5.6 12.16 13.65 2.67Z"/></svg>
<svg class="i" style="left:822.30px;top:448.50px;" width="14" height="14" viewBox="0 0 16 16" fill="#ffffff" stroke="#ffffff" stroke-width="0.25"><path d="M4.48 1.01 4 1.49V3.04L4.48 2.99L5.01 3.04V1.97H14.03V6.99H12.27L10.99 8.27V6.99H8.96L9.01 7.52L8.96 8H10.03V9.49L10.88 9.87L12.69 8H14.51L14.99 7.52V1.49L14.51 1.01ZM6.4 10.45Q7.15 9.97 7.57 9.2Q8 8.43 8 7.49Q8 6.56 7.52 5.76Q7.04 4.96 6.24 4.48Q5.44 4 4.51 4Q3.57 4 2.75 4.48Q1.92 4.96 1.47 5.76Q1.01 6.56 1.01 7.49Q1.01 8.43 1.44 9.2Q1.87 9.97 2.56 10.45Q1.87 10.77 1.28 11.36Q0.69 11.95 0.32 12.8Q0.11 13.39 0.05 14.03L0 14.99H1.01V14.45Q1.01 13.76 1.28 13.15Q1.55 12.53 2.03 12.03Q2.51 11.52 3.15 11.25Q3.79 10.99 4.48 10.99H4.53Q5.23 10.99 5.87 11.25Q6.51 11.52 6.99 12.03Q7.47 12.53 7.73 13.15Q8 13.76 8 14.45V14.99H9.01L8.96 13.97Q8.91 13.39 8.64 12.8Q8.32 11.95 7.73 11.36Q7.15 10.77 6.4 10.45ZM4.48 9.97Q3.47 9.97 2.75 9.25Q2.03 8.53 2.03 7.49Q2.03 6.45 2.75 5.73Q3.47 5.01 4.51 5.01Q5.55 5.01 6.27 5.73Q6.99 6.45 6.99 7.49Q6.99 8.53 6.27 9.25Q5.55 9.97 4.48 9.97Z"/></svg>
<svg class="i" style="left:852.00px;top:448.50px;" width="14" height="14" viewBox="0 0 16 16" fill="#ffffff" stroke="#ffffff" stroke-width="0.25"><path d="M13.39 10.56Q13.01 9.44 13.01 8.21V6.19Q13.01 5.23 12.69 4.35Q12.37 3.47 11.73 2.75Q11.09 2.03 10.27 1.57Q9.44 1.12 8.48 1.01Q7.41 0.91 6.4 1.25Q5.39 1.6 4.61 2.32Q3.84 3.04 3.41 4Q2.99 4.96 2.99 6.03V8.21Q2.99 9.44 2.61 10.56L2.03 12.32L2.45 13.01H5.97Q5.97 13.81 6.56 14.4Q7.15 14.99 7.97 14.99Q8.8 14.99 9.39 14.4Q9.97 13.81 9.97 13.01H13.49L13.97 12.32ZM8.69 13.71Q8.37 14.03 7.97 14.03Q7.57 14.03 7.28 13.73Q6.99 13.44 6.99 13.01H8.96Q9.01 13.44 8.69 13.71ZM3.15 12 3.52 10.88Q4 9.6 4 8.21V6.03Q4 5.17 4.35 4.37Q4.69 3.57 5.31 3.01Q5.92 2.45 6.75 2.19Q7.57 1.92 8.37 2.03Q9.97 2.24 10.99 3.41Q11.47 4 11.73 4.72Q12 5.44 12 6.19V8.21Q12 9.6 12.43 10.93L12.8 12Z"/></svg>
</div></div><div id="edge"></div></body></html>
